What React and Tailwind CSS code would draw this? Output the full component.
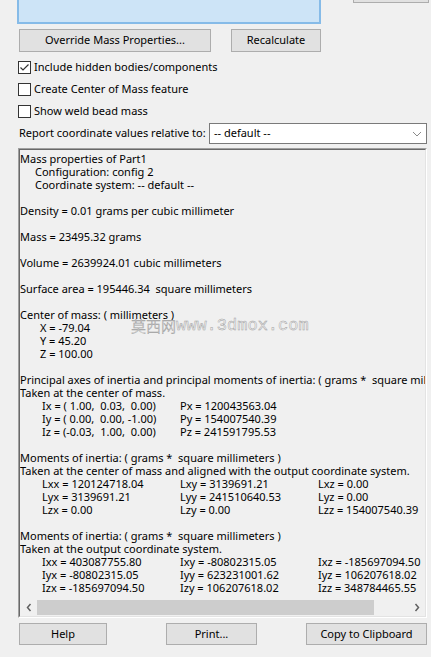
import React from "react";

const Line = ({ children, indent = "" }) => (
  <div className={`h-[13px] leading-[13px] whitespace-pre ${indent}`}>{children}</div>
);

const Blank = () => <div className="h-[13px]" />;

const Grid3 = ({ rows }) => (
  <div className="ml-[22px]">
    {rows.map((r, i) => (
      <div key={i} className="grid grid-cols-[138px_138px_auto] h-[13px] leading-[13px] whitespace-pre">
        {r.map((c, j) => (
          <span key={j}>{c}</span>
        ))}
      </div>
    ))}
  </div>
);

const Button = ({ children, className = "" }) => (
  <div
    className={`flex items-center justify-center bg-[#e1e1e1] border border-[#adadad] text-black ${className}`}
  >
    {children}
  </div>
);

const Checkbox = ({ checked, label }) => (
  <div className="flex items-center h-[22px] pl-[18px]">
    <div className="w-[13px] h-[13px] border border-[#333333] bg-white flex items-center justify-center">
      {checked && (
        <svg width="11" height="11" viewBox="0 0 11 11">
          <path d="M1.5 5.5 L4 8 L9.5 2.5" fill="none" stroke="#333333" strokeWidth="1.2" />
        </svg>
      )}
    </div>
    <span className="ml-[3px]">{label}</span>
  </div>
);

export default function App() {
  return (
    <div className="w-[431px] h-[657px] overflow-hidden bg-[#f0f0f0] text-black text-[11px] font-['Noto_Sans',sans-serif]">
      {/* top strip: list area above and a cut-off button on the right */}
      <div className="flex items-start">
        <div className="ml-[17px] w-[304px] h-[24px] bg-[#cde4f7] border-x-2 border-b-2 border-[#86bbe8]" />
        <div className="ml-[32px] w-[76px] h-[3px] bg-[#e1e1e1] border-x border-b border-[#adadad]" />
      </div>

      <div className="flex mt-[5px] ml-[19px] gap-[20px]">
        <Button className="w-[192px] h-[23px]">Override Mass Properties...</Button>
        <Button className="w-[90px] h-[23px]">Recalculate</Button>
      </div>

      <div className="mt-[4px]">
        <Checkbox checked label="Include hidden bodies/components" />
        <Checkbox label="Create Center of Mass feature" />
        <Checkbox label="Show weld bead mass" />
      </div>

      <div className="flex items-center mt-[1px] h-[21px] ml-[19px]">
        <span className="w-[190px]">Report coordinate values relative to:</span>
        <div className="w-[218px] h-[21px] bg-white border border-[#7a7a7a] flex items-center pl-[4px] pr-[4px]">
          <span className="flex-1">-- default --</span>
          <svg width="10" height="6" viewBox="0 0 10 6">
            <path d="M1 1 L5 5 L9 1" fill="none" stroke="#8a8a8a" strokeWidth="1" />
          </svg>
        </div>
      </div>

      {/* read-only report box with sunken edge */}
      <div className="relative mt-[4px] ml-[18px] w-[409px] h-[470px] border border-t-[#a0a0a0] border-l-[#a0a0a0] border-r-white border-b-white">
        <div className="flex flex-col h-full border border-t-[#696969] border-l-[#696969] border-r-[#e3e3e3] border-b-[#e3e3e3]">
          <div className="flex-1 overflow-hidden pt-[2px]">
            <Line>Mass properties of Part1</Line>
            <Line indent="pl-[15px]">Configuration: config 2</Line>
            <Line indent="pl-[15px]">Coordinate system: -- default --</Line>
            <Blank />
            <Line>Density = 0.01 grams per cubic millimeter</Line>
            <Blank />
            <Line>Mass = 23495.32 grams</Line>
            <Blank />
            <Line>Volume = 2639924.01 cubic millimeters</Line>
            <Blank />
            <Line>Surface area = 195446.34  square millimeters</Line>
            <Blank />
            <Line>Center of mass: ( millimeters )</Line>
            <Line indent="pl-[20px]">X = -79.04</Line>
            <Line indent="pl-[20px]">Y = 45.20</Line>
            <Line indent="pl-[20px]">Z = 100.00</Line>
            <Blank />
            <Line>Principal axes of inertia and principal moments of inertia: ( grams *  square millimeters )</Line>
            <Line>Taken at the center of mass.</Line>
            <Grid3
              rows={[
                ["Ix = ( 1.00,  0.03,  0.00)", "Px = 120043563.04", ""],
                ["Iy = ( 0.00,  0.00, -1.00)", "Py = 154007540.39", ""],
                ["Iz = (-0.03,  1.00,  0.00)", "Pz = 241591795.53", ""],
              ]}
            />
            <Blank />
            <Line>Moments of inertia: ( grams *  square millimeters )</Line>
            <Line>Taken at the center of mass and aligned with the output coordinate system.</Line>
            <Grid3
              rows={[
                ["Lxx = 120124718.04", "Lxy = 3139691.21", "Lxz = 0.00"],
                ["Lyx = 3139691.21", "Lyy = 241510640.53", "Lyz = 0.00"],
                ["Lzx = 0.00", "Lzy = 0.00", "Lzz = 154007540.39"],
              ]}
            />
            <Blank />
            <Line>Moments of inertia: ( grams *  square millimeters )</Line>
            <Line>Taken at the output coordinate system.</Line>
            <Grid3
              rows={[
                ["Ixx = 403087755.80", "Ixy = -80802315.05", "Ixz = -185697094.50"],
                ["Iyx = -80802315.05", "Iyy = 623231001.62", "Iyz = 106207618.02"],
                ["Izx = -185697094.50", "Izy = 106207618.02", "Izz = 348784465.55"],
              ]}
            />
          </div>

          {/* horizontal scroll bar */}
          <div className="flex h-[17px] bg-[#f0f0f0]">
            <div className="w-[17px] flex items-center justify-center">
              <svg width="6" height="9" viewBox="0 0 6 9">
                <path d="M4.5 1 L1.5 4.5 L4.5 8" fill="none" stroke="#606060" strokeWidth="1.5" />
              </svg>
            </div>
            <div className="flex-1 flex items-center">
              <div className="w-[337px] h-[15px] bg-[#cdcdcd]" />
            </div>
            <div className="w-[17px] flex items-center justify-center">
              <svg width="6" height="9" viewBox="0 0 6 9">
                <path d="M1.5 1 L4.5 4.5 L1.5 8" fill="none" stroke="#606060" strokeWidth="1.5" />
              </svg>
            </div>
          </div>
        </div>

        {/* site watermark over the report text */}
        <div className="absolute left-[112px] top-[168px] flex items-center leading-[17px] text-[#f3f3f3] [-webkit-text-stroke:0.45px_#9c9c9c] pointer-events-none">
          <span className="text-[15px] font-['Noto_Sans_CJK_SC',sans-serif] font-light">莫西网</span>
          <span className="text-[17px] font-['Liberation_Mono',monospace]">www.3dmox.com</span>
        </div>
      </div>

      <div className="flex mt-[5px] ml-[19px]">
        <Button className="w-[88px] h-[22px]">Help</Button>
        <Button className="ml-[59px] w-[91px] h-[22px]">Print...</Button>
        <Button className="ml-[49px] w-[121px] h-[22px]">Copy to Clipboard</Button>
      </div>
    </div>
  );
}
